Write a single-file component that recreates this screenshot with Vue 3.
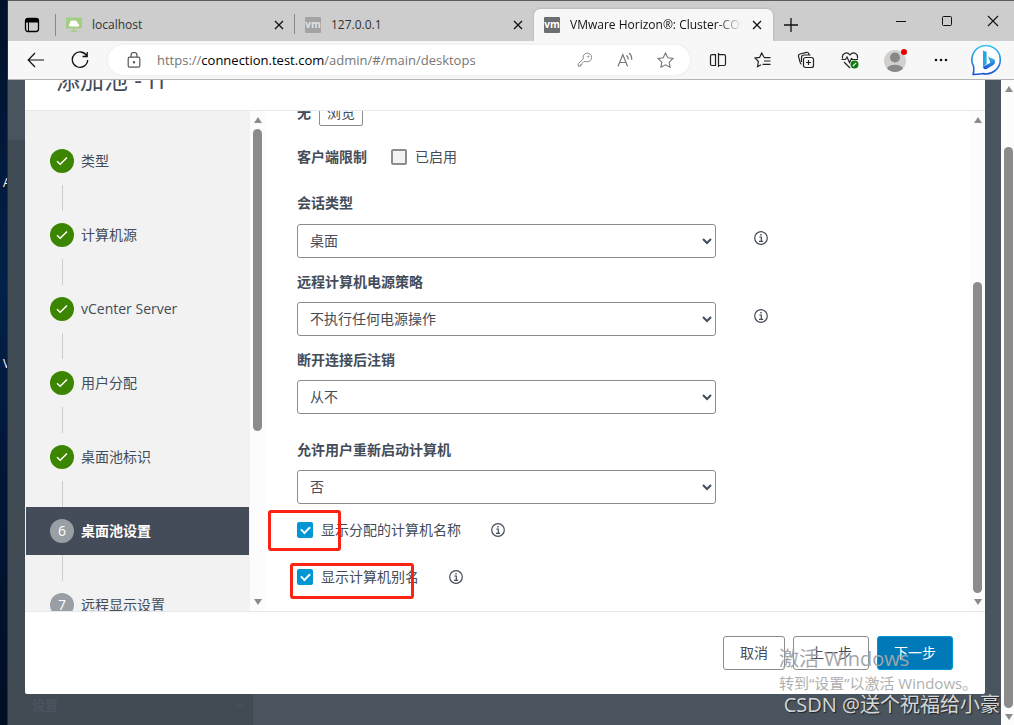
<script setup>
import { ref, h } from 'vue'

const tabs = [
  { title: 'localhost', icon: 'monitor', active: false },
  { title: '127.0.0.1', icon: 'vm', active: false },
  { title: 'VMware Horizon®: Cluster-CONNECTION', icon: 'vm', active: true },
]

const steps = [
  { label: '类型', state: 'done' },
  { label: '计算机源', state: 'done' },
  { label: 'vCenter Server', state: 'done' },
  { label: '用户分配', state: 'done' },
  { label: '桌面池标识', state: 'done' },
  { label: '桌面池设置', state: 'current' },
  { label: '远程显示设置', state: 'todo' },
]

const fields = ref([
  { id: 'session', label: '会话类型', value: '桌面', info: true },
  { id: 'power', label: '远程计算机电源策略', value: '不执行任何电源操作', info: true },
  { id: 'logoff', label: '断开连接后注销', value: '从不', info: false },
  { id: 'restart', label: '允许用户重新启动计算机', value: '否', info: false, spaced: true },
])

const checks = ref([
  { id: 'assigned', label: '显示分配的计算机名称', on: true, mark: 'mark-a' },
  { id: 'alias', label: '显示计算机别名', on: true, mark: 'mark-b' },
])
const restricted = ref(false)

const InfoIcon = () =>
  h('svg', { width: 14, height: 14, viewBox: '0 0 14 14', fill: 'none', stroke: '#434c58', 'stroke-width': 1.2 }, [
    h('circle', { cx: 7, cy: 7, r: 6.3 }),
    h('path', { d: 'M5.3 6h2v4.2M5 10.4h4.2' }),
    h('path', { d: 'M6.3 3.7h1.4', 'stroke-width': 1.6 }),
  ])
</script>

<template>
  <div class="screen">
    <aside class="desktop">
      <span class="shortcut first">A</span>
      <span class="shortcut second">V</span>
    </aside>

    <div class="window">
      <header class="tabstrip">
        <button class="tab-menu" aria-label="标签操作">
          <svg width="16" height="16" viewBox="0 0 16 16"><rect x="1.5" y="1.5" width="13" height="13" rx="2.5" fill="none" stroke="#000" stroke-width="1.3"/><path d="M1.5 5V3.5a2 2 0 0 1 2-2h9a2 2 0 0 1 2 2V5z" fill="#000" stroke="#000"/><path d="M4.5 5v9.500" stroke="#000" stroke-width="1"/></svg>
        </button>
        <div v-for="t in tabs" :key="t.title" class="tab" :class="{ active: t.active }">
          <svg v-if="t.icon === 'monitor'" width="16" height="16" viewBox="0 0 16 16"><path d="M0 .5h16v11H0z" fill="#a5ce85"/><path d="M3.500 9.500a2 2 0 0 1 .3-3 2.500 2.500 0 0 1 3.700-2.700 3 3 0 0 1 4.200 2.700 1.700 1.700 0 0 1 .8 3z" fill="#fff"/><path d="M6.500 12.500h3v1.500h2v1h-7v-1h2z" fill="#a5ce85"/></svg>
          <span v-else class="vm">vm</span>
          <button class="tab-title">{{ t.title }}</button>
          <button class="tab-close" aria-label="关闭标签页">
            <svg width="10" height="10" viewBox="0 0 10 10"><path d="M1 1l8 8M9 1l-8 8" stroke="#111" stroke-width="1.3"/></svg>
          </button>
        </div>
        <button class="tab-new" aria-label="新建标签页">
          <svg width="14" height="14" viewBox="0 0 14 14"><path d="M7 0v14M0 7h14" stroke="#111" stroke-width="1.3"/></svg>
        </button>
        <div class="controls">
          <button aria-label="最小化"><svg width="12" height="12" viewBox="0 0 12 12"><path d="M1 6.500h10" stroke="#111"/></svg></button>
          <button aria-label="最大化"><svg width="12" height="12" viewBox="0 0 12 12"><rect x="1.500" y="1.500" width="9" height="9" rx="1" fill="none" stroke="#111"/></svg></button>
          <button aria-label="关闭"><svg width="12" height="12" viewBox="0 0 12 12"><path d="M1 1l10 10M11 1L1 11" stroke="#111" stroke-width="1.100"/></svg></button>
        </div>
      </header>

      <nav class="toolbar">
        <button class="nav-btn" aria-label="后退">
          <svg width="18" height="16" viewBox="0 0 18 16" fill="none" stroke="#111" stroke-width="1.200"><path d="M17 8H1.500M8 1L1.200 8 8 15"/></svg>
        </button>
        <button class="nav-btn" aria-label="刷新">
          <svg width="18" height="18" viewBox="0 0 18 18" fill="none" stroke="#111" stroke-width="1.300"><path d="M15.800 5A7.700 7.700 0 1 0 16.700 9M16.200 1v4.500h-4.700"/></svg>
        </button>
        <div class="address">
          <svg width="14" height="16" viewBox="0 0 14 16" fill="none" stroke="#555" stroke-width="1.200"><rect x="1.200" y="5.200" width="11.600" height="10" rx="1.500"/><path d="M4 5V3.500a3 3 0 0 1 6 0V5"/><circle cx="7" cy="10.200" r=".6" fill="#555"/></svg>
          <div class="url" role="textbox" contenteditable="true" spellcheck="false" aria-label="地址">https://<b>connection.test.com</b>/admin/#/main/desktops</div>
          <button aria-label="密码">
            <svg width="16" height="16" viewBox="0 0 16 16" fill="none" stroke="#888" stroke-width="1"><path d="M7 9.400L4.900 11.500v1.300H3.500v1.400H1.200v-2.300L6.300 6.900A4.300 4.300 0 1 1 9.300 9.600 4 4 0 0 1 7 9.400z"/><circle cx="11.300" cy="4.600" r=".6"/></svg>
          </button>
          <button aria-label="大声朗读">
            <svg width="17" height="16" viewBox="0 0 17 16" fill="none" stroke="#777" stroke-width="1.200"><path d="M1 14.500L5.800 2.500l4.800 12M2.700 10.500h6.200M9.500 3.200a5 5 0 0 1 1.600 4.200M12 1a8 8 0 0 1 2.700 6.800"/></svg>
          </button>
          <button aria-label="收藏此页">
            <svg width="17" height="17" viewBox="0 0 17 17" fill="none" stroke="#777" stroke-width="1.100"><path d="M8.500 1l2.300 4.800 5.200.7-3.800 3.600.9 5.200-4.600-2.500-4.600 2.500.9-5.200L1 6.500l5.200-.7z"/></svg>
          </button>
        </div>
        <div class="tools">
          <button aria-label="拆分屏幕">
            <svg width="18" height="16" viewBox="0 0 18 16" fill="none" stroke="#222" stroke-width="1.200"><path d="M6.500 2.600H3A1.500 1.500 0 0 0 1.500 4v8A1.500 1.500 0 0 0 3 13.500h3.500zM11.500 2.600H15A1.500 1.500 0 0 1 16.500 4v8a1.500 1.500 0 0 1-1.500 1.500h-5.500V2.600h2M9.500 1v14"/></svg>
          </button>
          <button aria-label="收藏夹">
            <svg width="17" height="16" viewBox="0 0 17 16" fill="none" stroke="#222" stroke-width="1.200"><path d="M10 5.200L7.700 1 5.600 5.400 1 6l3.400 3.500L3.500 14.700 7 12.800M10 5.600h6.500M10 9h6.500M8.500 12.400h8"/></svg>
          </button>
          <button aria-label="集锦">
            <svg width="18" height="18" viewBox="0 0 18 18" fill="none" stroke="#222" stroke-width="1.200"><rect x="6.500" y="6.500" width="10" height="10" rx="2"/><path d="M11.500 9v5M9 11.500h5M4.500 13.200A2 2 0 0 1 3.200 11.500L1.500 5.300A2 2 0 0 1 3 3l6.500-1.700a2 2 0 0 1 2.300 1.500l.2 1.200M4.500 11V6.500A2.500 2.500 0 0 1 7 4h6.500"/></svg>
          </button>
          <button aria-label="浏览器概要">
            <svg width="18" height="18" viewBox="0 0 18 18" fill="none" stroke="#222" stroke-width="1.200"><path d="M1.800 7.500C.2 3.200 5.500-.5 9 4c3.500-4.500 8.800-.8 7.200 3.500M.5 8.500h4l1.500-2.500 2.500 5.500 2-4 1 1H17M3 11l6 6"/><circle cx="13.500" cy="13.500" r="4" fill="#107c10" stroke="none"/><path d="M11.800 15.200l3.400-3.400" stroke="#fff"/></svg>
          </button>
          <button aria-label="个人资料">
            <svg width="24" height="24" viewBox="0 0 24 24"><circle cx="12" cy="13" r="11" fill="#d2d0ce"/><circle cx="12" cy="9.500" r="5" fill="#8a8886"/><path d="M4 20.500a8.500 5.500 0 0 1 16 0 11 11 0 0 1-16 0z" fill="#8a8886"/><circle cx="21" cy="4" r="3" fill="#e80000"/></svg>
          </button>
          <button aria-label="更多">
            <svg width="14" height="4" viewBox="0 0 14 4" fill="#111"><circle cx="2" cy="2" r="1.300"/><circle cx="7" cy="2" r="1.300"/><circle cx="12" cy="2" r="1.300"/></svg>
          </button>
          <button aria-label="Bing">
            <svg width="32" height="32" viewBox="0 0 32 32"><defs><linearGradient id="bing" x1="0" y1="0" x2="0" y2="1"><stop offset="0" stop-color="#36c3ee"/><stop offset="1" stop-color="#1b52d6"/></linearGradient></defs><path d="M2 30.500c1-2 1-4 .6-8A14.200 14.200 0 1 1 12 29.600c-3 .4-7 1-10 .9z" fill="#fff" stroke="url(#bing)" stroke-width="1.600" stroke-linejoin="round"/><path d="M12 6.500l3.600 1.600v12L12 23z" fill="#2aa6e8"/><path d="M17 12.500l6.300 3c1.300 2 .8 4.400-1 5.600L15.500 25c-1.800.8-3.500-.2-3.500-2.200l7.400-4z" fill="url(#bing)"/></svg>
          </button>
        </div>
      </nav>

      <div class="viewport">
        <div class="page">
          <div class="behind" aria-hidden="true">
            <span>设置</span>
            <svg width="10" height="6" viewBox="0 0 10 6" fill="none" stroke="#4b555f"><path d="M1 1l4 4 4-4"/></svg>
          </div>
          <section class="modal" role="dialog" aria-labelledby="title">
            <header class="modal-head"><h1 id="title">添加池 - IT</h1></header>
            <div class="modal-body">
              <ol class="steps">
                <li v-for="(s, i) in steps" :key="s.label">
                  <button class="step" :class="s.state">
                    <span class="badge">
                      <svg v-if="s.state === 'done'" width="12" height="10" viewBox="0 0 12 10"><path d="M1 5.200l3.200 3L11 1.500" fill="none" stroke="#fff" stroke-width="1.500"/></svg>
                      <template v-else>{{ i + 1 }}</template>
                    </span>
                    {{ s.label }}
                  </button>
                </li>
              </ol>
              <div class="scrollbar nav-scroll"><i class="up"></i><div class="track"><div class="thumb"></div></div><i class="down"></i></div>

              <form class="settings" @submit.prevent>
                <div class="browse-row"><strong>无</strong><button type="button" class="browse">浏览</button></div>
                <div class="restrict-row">
                  <strong>客户端限制</strong>
                  <input id="restrict" v-model="restricted" type="checkbox" class="box" />
                  <label for="restrict">已启用</label>
                </div>
                <div v-for="f in fields" :key="f.id" class="field" :class="{ spaced: f.spaced }">
                  <label :for="f.id">{{ f.label }}</label>
                  <div class="control">
                    <select :id="f.id"><option>{{ f.value }}</option></select>
                    <button v-if="f.info" type="button" class="info" aria-label="信息"><InfoIcon /></button>
                  </div>
                </div>
                <div class="checks">
                  <div v-for="c in checks" :key="c.id" class="check">
                    <input :id="c.id" v-model="c.on" type="checkbox" class="box" />
                    <label :for="c.id">{{ c.label }}</label>
                    <button type="button" class="info" aria-label="信息"><InfoIcon /></button>
                    <span class="mark" :class="c.mark"></span>
                  </div>
                </div>
              </form>
              <div class="scrollbar form-scroll"><i class="up"></i><div class="track"><div class="thumb"></div></div><i class="down"></i></div>
            </div>
            <footer class="modal-foot">
              <button class="btn">取消</button>
              <button class="btn">上一步</button>
              <button class="btn primary">下一步</button>
            </footer>
          </section>
        </div>
        <div class="scrollbar page-scroll"><i class="up"></i><div class="track"><div class="thumb"></div></div><i class="down"></i></div>
      </div>
    </div>

    <div class="activate">
      <p class="big">激活 Windows</p>
      <p>转到“设置”以激活 Windows。</p>
    </div>
    <div class="credit">CSDN @送个祝福给小豪</div>
  </div>
</template>

<style>
body { margin: 0; overflow: hidden; }
</style>

<style scoped>
* { box-sizing: border-box; }
.screen {
  position: relative;
  display: flex;
  height: 100vh;
  overflow: hidden;
  font: 14px/24px "Open Sans", "Noto Sans CJK SC", sans-serif;
  color: #434c58;
}
button { border: 0; padding: 0; background: none; font: inherit; color: inherit; display: flex; align-items: center; justify-content: center; }
svg { display: block; flex: none; }

.desktop { position: relative; flex: none; width: 8px; overflow: hidden; background: linear-gradient(#01102a, #022148 40%, #01183a 60%, #010d24); color: #fff; font-size: 12px; border-right: 1px solid #252d38; }
.shortcut { position: absolute; left: 3px; }
.first { top: 171px; }
.second { top: 352px; }

.window { flex: 1; min-width: 0; display: flex; flex-direction: column; border-top: 3px solid #cdcdcd; position: relative; }
.window::before { content: ""; position: absolute; left: 0; right: 0; top: -3px; height: 1px; background: #5d5b5d; }

.tabstrip { flex: none; display: flex; height: 38px; background: #cdcdcd; color: #333; font-size: 12px; overflow: hidden; }
.tab-menu { flex: none; width: 48px; height: 22px; margin-top: 11px; border-right: 1px solid #888; }
.tab { flex: 0 1 239px; min-width: 0; display: flex; align-items: center; gap: 10px; padding: 0 11px 0 10px; margin-top: 6px; height: 32px; }
.tab:not(.active) { position: relative; }
.tab:nth-child(2)::after { content: ""; position: absolute; right: 0; top: 5px; width: 1px; height: 20px; background: #888; }
.tab.active { background: #f7f7f7; border-radius: 6px 6px 0 0; box-shadow: 0 0 2px #999; color: #111; }
.tab-title { flex: 1; min-width: 0; justify-content: flex-start; overflow: hidden; white-space: nowrap; }
.active .tab-title { mask-image: linear-gradient(90deg, #000 85%, transparent); }
.vm { flex: none; width: 16px; height: 16px; border-radius: 1px; background: #a3a3a3; color: #e2e2e2; font: bold 10px/14px "Open Sans", sans-serif; text-align: center; }
.active .vm { background: #6d6e71; color: #fff; }
.tab-new { width: 36px; padding-top: 6px; }
.controls { margin: 0 -2px 0 auto; display: flex; }
.controls button { width: 46px; padding-bottom: 2px; }

.toolbar { flex: none; display: flex; align-items: center; height: 39px; padding: 0 4px 0 6px; background: #f7f7f7; border-bottom: 1px solid #b5b5b5; }
.nav-btn { width: 44px; height: 32px; }
.address { flex: 1; min-width: 0; height: 30px; margin: 0 6px; padding: 0 5px 0 19px; display: flex; align-items: center; border-radius: 15px; background: #fff; box-shadow: 0 0 3px #e4e4e4; }
.url { flex: 1; min-width: 0; margin-left: 16px; overflow: hidden; white-space: nowrap; color: #767676; outline: 0; font: 13px/24px "Open Sans", sans-serif; }
.url b { font-weight: 400; color: #000; }
.address button { width: 40px; height: 28px; }
.tools { display: flex; }
.tools button { width: 44px; height: 34px; }
.tools button:nth-child(n+5) { width: 46px; }

.viewport { flex: 1; min-height: 0; display: flex; }
.page { flex: 1; min-width: 0; display: flex; padding: 0 16px 31px 17px; background: #4a545e; position: relative; }
.behind { position: absolute; left: 0; top: 60px; bottom: 0; width: 245px; padding: 0 8px 8px 24px; background: #414b54; color: #4b555f; font-weight: 700; font-size: 13px; display: flex; align-items: flex-end; justify-content: space-between; }
.behind svg { margin-bottom: 9px; }
.modal { position: relative; flex: 1; min-width: 0; display: flex; flex-direction: column; background: #fff; border-radius: 0 0 2px 2px; }
.modal-head { flex: none; height: 31px; padding: 0 31px 14px; display: flex; align-items: flex-end; overflow: hidden; border-bottom: 1px solid #e8e8e8; }
h1 { margin: 0; font: 400 24px/32px "Open Sans", "Noto Sans CJK SC", sans-serif; }
.modal-body { flex: 1; min-height: 0; display: flex; overflow: hidden; }

.steps { flex: none; width: 225px; margin: 0; padding: 26px 1px 0; list-style: none; background: #f2f2f2; overflow: hidden; }
.steps li:not(:last-child)::after { content: ""; display: block; width: 1px; height: 26px; margin-left: 36px; background: #ccc; }
.step { width: 100%; height: 48px; padding-left: 24px; gap: 7px; justify-content: flex-start; }
.badge { width: 24px; height: 24px; border-radius: 50%; display: flex; align-items: center; justify-content: center; background: #9a9fa6; color: #fff; font-weight: 400; }
.done .badge { background: #3c8500; }
.current { background: #434c58; color: #fff; font-weight: 700; }

.scrollbar { flex: none; width: 15px; padding: 6px 3px; background: #fcfcfc; display: flex; flex-direction: column; align-items: center; }
.scrollbar i { border: 4px solid transparent; }
.up { border-top: 0 !important; border-bottom: 6px solid #8b8b8b !important; }
.down { border-bottom: 0 !important; border-top: 6px solid #8b8b8b !important; }
.track { flex: 1; width: 9px; margin: 6px 0; display: flex; flex-direction: column; }
.thumb { border-radius: 5px; background: #8b8b8b; height: 65%; }
.form-scroll .track { justify-content: flex-end; }
.form-scroll .thumb { height: 67%; }
.page-scroll { width: 13px; padding: 6px 1px 5px 3px; }
.page-scroll .track { justify-content: flex-end; }
.page-scroll .thumb { height: 92%; }

.settings { flex: 1; min-width: 0; margin-top: -9px; padding-left: 32px; display: flex; flex-direction: column; }
.browse-row { display: flex; gap: 8px; height: 24px; line-height: 22px; }
.browse { height: 24px; padding: 0 7px 2px; border: 1px solid #8c8c8c; border-radius: 2px; }
.restrict-row { display: flex; align-items: center; height: 24px; margin: 19px 0 22px; gap: 8px; }
.restrict-row strong { margin-right: 16px; }
.box { appearance: none; flex: none; width: 16px; height: 16px; margin: 0; border: 2px solid #8c8c8c; border-radius: 2px; background: #f2f2f2; display: grid; place-items: center; }
.box:checked { border-color: #0095d3; background: #0095d3; }
.box:checked::after { content: ""; width: 7px; height: 4px; margin-bottom: 2px; border: solid #fff; border-width: 0 0 2px 2px; transform: rotate(-45deg); }
.field { margin-bottom: 12px; }
.field.spaced { margin-top: 12px; }
.field > label { display: block; margin-bottom: 8px; font-weight: 700; }
.restrict-row + .field > label { margin-bottom: 9px; }
.control { display: flex; align-items: flex-start; gap: 38px; }
select { width: 419px; min-width: 0; height: 34px; padding: 0 0 2px 8px; border: 1px solid #8c8c8c; border-radius: 3px; background: #fff; color: inherit; font: inherit; }
.control .info { margin-top: 7px; }
.checks { display: flex; flex-direction: column; gap: 23px; margin-top: 2px; }
.check { position: relative; display: flex; align-items: center; height: 24px; gap: 8px; }
.check .info { margin-left: 22px; }
.mark { position: absolute; border: 3px solid #fb2314; border-radius: 3px; pointer-events: none; }
.mark-a { left: -29px; top: -8px; width: 73px; height: 41px; }
.mark-b { left: -7px; top: -2px; width: 124px; height: 36px; }

.modal-foot { flex: none; display: flex; justify-content: flex-end; gap: 8px; padding: 24px 32px; border-top: 1px solid #e8e8e8; }
.btn { height: 34px; padding: 0 16px; border: 1px solid #8c8c8c; border-radius: 3px; }
.primary { background: #0079b8; border-color: #0095d3; color: #fff; }

.activate { position: absolute; right: 32px; bottom: 30px; width: 203px; color: #b0b0b0; font-size: 15px; white-space: nowrap; pointer-events: none; }
.activate p { margin: 0; }
.activate .big { font-size: 20px; color: #a2a5a8; }
.credit { position: absolute; right: 14px; bottom: 6px; font-size: 20px; line-height: 28px; color: #d4d7da; text-shadow: 1px 1px 1px #222; white-space: nowrap; pointer-events: none; }
</style>
